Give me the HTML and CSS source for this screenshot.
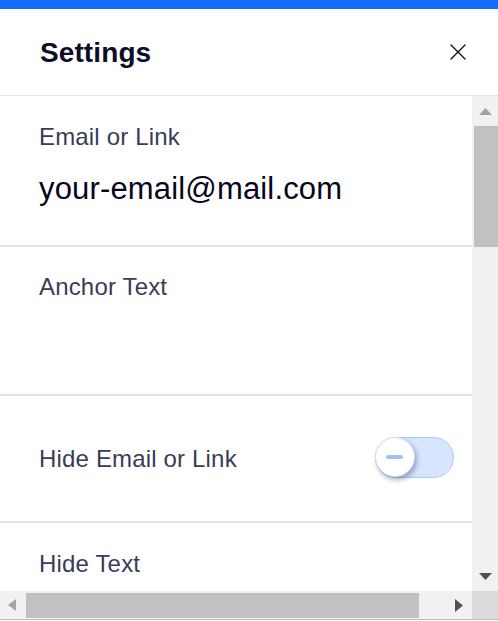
FILE: index.html
```html
<!DOCTYPE html>
<html lang="en">
<head>
<meta charset="utf-8">
<title>Settings</title>
<link rel="stylesheet" href="styles.css">
</head>
<body>
<div class="panel">
  <div class="topbar"></div>
  <header class="header">
    <h1 class="title">Settings</h1>
    <button class="close" aria-label="Close">
      <svg width="16" height="16" viewBox="0 0 16 16"><path d="M1 1 L15 15 M15 1 L1 15" stroke="#0f1224" stroke-width="1.4" fill="none" stroke-linecap="round"/></svg>
    </button>
  </header>
  <div class="pane">
    <div class="viewport">
      <section class="row row-email">
        <div class="label">Email or Link</div>
        <div class="value">your-email@mail.com</div>
      </section>
      <section class="row row-anchor">
        <div class="label">Anchor Text</div>
      </section>
      <section class="row row-toggle">
        <div class="label">Hide Email or Link</div>
        <div class="toggle"><div class="knob"><span class="minus"></span></div></div>
      </section>
      <section class="row row-last">
        <div class="label">Hide Text</div>
      </section>
    </div>
    <div class="vbar">
      <div class="vbtn up"><svg width="13" height="7" viewBox="0 0 13 7"><path d="M0 7 L6.5 0 L13 7 Z" fill="#a3a3a3"/></svg></div>
      <div class="vthumb"></div>
      <div class="vspace"></div>
      <div class="vbtn down"><svg width="13" height="7" viewBox="0 0 13 7"><path d="M0 0 L13 0 L6.5 7 Z" fill="#505050"/></svg></div>
    </div>
    <div class="hbar">
      <div class="hbtn left"><svg width="8" height="12" viewBox="0 0 8 12"><path d="M8 0 L8 12 L0 6 Z" fill="#a3a3a3"/></svg></div>
      <div class="hthumb"></div>
      <div class="hspace"></div>
      <div class="hbtn right"><svg width="8" height="13" viewBox="0 0 8 13"><path d="M0 0 L8 6.5 L0 13 Z" fill="#505050"/></svg></div>
    </div>
    <div class="corner"></div>
  </div>
  <div class="footer"></div>
</div>
</body>
</html>
```
FILE: styles.css
```css
html, body {
  margin: 0;
  padding: 0;
  background: #ffffff;
}
body {
  width: 498px;
  height: 621px;
  overflow: hidden;
  font-family: "Liberation Sans", Arial, sans-serif;
}
.panel {
  display: flex;
  flex-direction: column;
  width: 498px;
  height: 621px;
}
.topbar {
  height: 9px;
  background: #116dff;
  flex: none;
}
.header {
  height: 86px;
  flex: none;
  display: flex;
  align-items: center;
  justify-content: space-between;
  padding: 0 32px 0 40px;
  border-bottom: 1px solid #e3e5ea;
}
.title {
  margin: 0;
  font-family: "Liberation Sans", Arial, sans-serif;
  font-weight: 700;
  font-size: 28px;
  line-height: 32px;
  color: #0c0e27;
  padding-top: 1px;
  letter-spacing: 0.1px;
}
.close {
  border: 0;
  background: transparent;
  padding: 0;
  width: 16px;
  height: 16px;
  display: flex;
}
.pane {
  flex: none;
  display: grid;
  grid-template-columns: 472px 26px;
  grid-template-rows: 495px 28px;
}
.viewport {
  overflow: hidden;
  display: flex;
  flex-direction: column;
}
.row {
  flex: none;
  padding-left: 40px;
  border-bottom: 2px solid #dfe4ea;
  box-sizing: border-box;
}
.label {
  font-size: 24px;
  line-height: 28px;
  color: #393c57;
  letter-spacing: 0.17px;
  margin-left: -1px;
}
.row-email {
  height: 151px;
  padding-top: 27px;
}
.value {
  margin-top: 20px;
  margin-left: -1px;
  font-size: 31px;
  line-height: 36px;
  color: #05061a;
  letter-spacing: 0.16px;
}
.row-anchor {
  height: 149px;
  padding-top: 26px;
}
.row-toggle {
  height: 127px;
  display: flex;
  align-items: center;
  justify-content: space-between;
  padding-right: 18px;
  padding-top: 1px;
}
.row-last {
  border-bottom: 0;
  padding-top: 27px;
  height: 80px;
}
.toggle {
  width: 79px;
  height: 41px;
  box-sizing: border-box;
  border-radius: 21px;
  background: #d6e6fe;
  border: 1.5px solid #a9cafc;
  position: relative;
  margin-top: -4px;
}
.knob {
  position: absolute;
  left: -1px;
  top: -1px;
  width: 40px;
  height: 40px;
  box-sizing: border-box;
  border-radius: 50%;
  background: #ffffff;
  border: 1px solid #cfe0fa;
  box-shadow: 2px 3px 5px rgba(30, 40, 70, 0.35);
  display: flex;
  align-items: center;
  justify-content: center;
}
.minus {
  width: 17px;
  height: 4px;
  border-radius: 2px;
  background: #9ec2f8;
  margin-left: -1px;
}
.vbar {
  background: #f1f1f1;
  display: flex;
  flex-direction: column;
}
.vbtn {
  flex: none;
  height: 30px;
  display: flex;
  align-items: center;
  justify-content: center;
  padding-left: 1px;
}
.vbtn.down {
  height: 31px;
  padding-top: 2px;
  box-sizing: border-box;
}
.vthumb {
  flex: none;
  height: 121px;
  margin-left: 2px;
  background: #c1c1c1;
}
.vspace {
  flex: 1;
}
.hbar {
  background: #f1f1f1;
  display: flex;
  align-items: stretch;
}
.hbtn {
  flex: none;
  width: 26px;
  display: flex;
  align-items: center;
  justify-content: center;
}
.hbtn.left {
  padding-right: 3px;
  box-sizing: border-box;
}
.hthumb {
  flex: none;
  width: 393px;
  margin: 2px 0 1px;
  background: #c1c1c1;
}
.hspace {
  flex: 1;
}
.corner {
  background: #dcdcdc;
}
.footer {
  flex: none;
  height: 2px;
  border-top: 1px solid #bdbdbd;
  background: #ffffff;
}
```
